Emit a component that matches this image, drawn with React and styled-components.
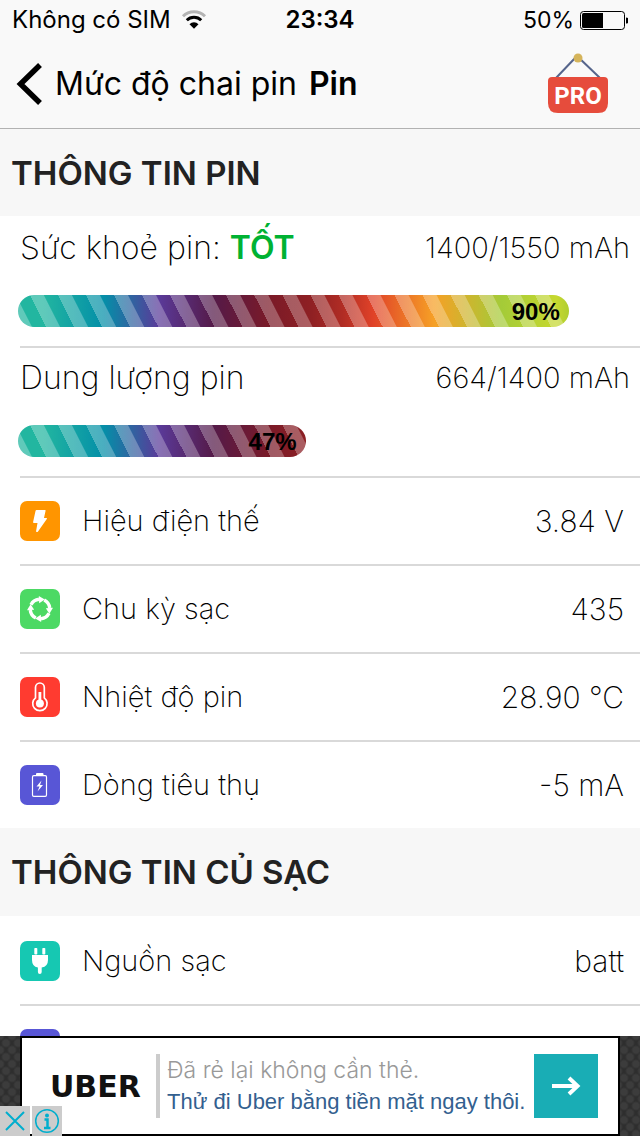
import React from 'react';
import styled, { createGlobalStyle } from 'styled-components';

const GlobalStyle = createGlobalStyle`
	*, *::before, *::after {
		box-sizing: border-box;
	}
	body {
		margin: 0;
		background-color: #ffffff;
		color: #000000;
		font-family: Inter, "Liberation Sans", sans-serif;
	}
`;

const Screen = styled.div`
	display: flex;
	flex-direction: column;
	height: 100vh;
`;

const Header = styled.header`
	flex: none;
	background-color: #f9f9f9;
`;

const StatusBar = styled.div`
	display: grid;
	grid-template-columns: 1fr auto 1fr;
	align-items: center;
	height: 40px;
	padding: 0 12px;
	font-size: 24px;
	line-height: 40px;
`;

const StatusGroup = styled.div`
	display: flex;
	align-items: center;
	justify-content: ${props => (props.$end ? 'flex-end' : 'flex-start')};
	gap: ${props => (props.$end ? '6px' : '10px')};
	font-size: ${props => (props.$end ? '23px' : '24px')};
	white-space: nowrap;
`;

const Clock = styled.time`
	font-weight: 600;
`;

const NavBar = styled.nav`
	display: flex;
	align-items: center;
	height: 88px;
	padding: 0 32px 0 16px;
`;

const BackButton = styled.button`
	display: flex;
	align-items: center;
	gap: 12px;
	padding: 0;
	border: none;
	background: none;
	color: inherit;
	font-family: inherit;
	font-size: 32px;
	line-height: 40px;
`;

const Title = styled.h1`
	flex: 1;
	margin: 0 0 0 12px;
	font-size: 32px;
	line-height: 40px;
	font-weight: 600;
`;

const ProButton = styled.button`
	display: block;
	padding: 0;
	border: none;
	background: none;
`;

const Content = styled.main`
	flex: 1;
	min-height: 0;
	overflow-y: auto;
	scrollbar-width: none;
`;

const SectionTitle = styled.h2`
	height: 88px;
	margin: 0;
	padding: 0 11px;
	background-color: #f7f7f7;
	color: #222222;
	font-size: 33px;
	line-height: 88px;
	font-weight: 600;

	section:first-child > & {
		border-top: 1px solid #b2b2b2;
	}
`;

const List = styled.ul`
	margin: 0;
	padding: 0 0 0 20px;
	list-style: none;
`;

const Item = styled.li`
	border-top: 2px solid #d9d9d9;

	&:first-child {
		border-top-color: transparent;
	}
`;

const Row = styled.div`
	display: flex;
	align-items: center;
	gap: 22px;
	height: 86px;
	padding-right: 16px;
	font-size: 30px;
	line-height: 40px;
	font-weight: 200;
`;

const Label = styled.span`
	flex: 1;
	font-size: 29px;
`;

const Meter = styled.div`
	display: flex;
	flex-direction: column;
	gap: 27px;
	height: 128px;
	padding: 10px 10px 0 0;
`;

const MeterHead = styled.div`
	display: flex;
	justify-content: space-between;
	font-size: 32px;
	line-height: 40px;
	font-weight: 200;
`;

const MeterValue = styled.span`
	font-size: 29px;
`;

const Good = styled.strong`
	color: #00b233;
	font-weight: 600;
`;

const Track = styled.div`
	container-type: inline-size;
	height: 32px;
	margin-left: -2px;
`;

const Fill = styled.div`
	height: 32px;
	padding-right: 9px;
	border-radius: 16px;
	background-image:
		repeating-linear-gradient(
			63deg,
			rgba(255, 255, 255, 0.28) 0 12px,
			rgba(255, 255, 255, 0) 13px 25px
		),
		linear-gradient(
			to right,
			#22b6a0 0%,
			#22b6a0 4%,
			#048fa8 14%,
			#5a3a99 23%,
			#551a48 32%,
			#7a1a28 41%,
			#8f2023 48%,
			#b02c24 53%,
			#e04228 58%,
			#f6a026 68%,
			#a4cb38 79%,
			#c6d82f 88%,
			#b0ce30 90%
		);
	background-size: 100% 100%, 100cqw 100%;
	font-family: "Liberation Sans", sans-serif;
	font-size: 24px;
	line-height: 34px;
	font-weight: 700;
	text-align: right;
`;

const Tile = styled.svg`
	display: block;
	flex: none;
	width: 40px;
	height: 40px;
	border-radius: 7px;
	background-color: ${props => props.$color};
`;

const Ad = styled.aside`
	position: relative;
	flex: none;
	height: 100px;
	padding: 0 20px;
	background-color: #2e2e2e;
	background-image:
		radial-gradient(circle, #3c3c3c 0 3px, rgba(60, 60, 60, 0) 5px),
		radial-gradient(circle, #3c3c3c 0 3px, rgba(60, 60, 60, 0) 5px);
	background-size: 12px 14px;
	background-position: 0 0, 6px 7px;
`;

const AdCard = styled.a`
	display: flex;
	align-items: center;
	height: 100px;
	padding: 0 20px 0 28px;
	border: 2px solid #000000;
	background-color: #ffffff;
	text-decoration: none;
`;

const AdBrand = styled.span`
	width: 106px;
	color: #111111;
	font-family: "DejaVu Sans", sans-serif;
	font-size: 30px;
	font-weight: 700;
`;

const AdText = styled.span`
	display: flex;
	flex: 1;
	flex-direction: column;
	height: 64px;
	padding-left: 7px;
	border-left: 4px solid #cccccc;
	color: #33608f;
	font-family: "Liberation Sans", sans-serif;
	font-size: 22px;
	line-height: 32px;
	white-space: nowrap;
`;

const AdLead = styled.span`
	color: #999999;
	font-family: Inter, sans-serif;
	font-size: 23px;
	font-weight: 300;
`;

const AdArrow = styled.span`
	display: flex;
	align-items: center;
	justify-content: center;
	flex: none;
	width: 64px;
	height: 64px;
	background-color: #19adb5;
`;

const AdChoices = styled.div`
	position: absolute;
	left: 0;
	bottom: 0;
	display: flex;
	gap: 2px;
`;

const AdChoice = styled.button`
	display: block;
	width: 30px;
	height: 30px;
	padding: 0;
	border: none;
	background-color: #cccccc;
`;

const WifiIcon = () => (
	<svg width="26" height="20" viewBox="0 0 26 20" fill="none" strokeWidth="3">
		<path d="M2 6.3a15.500 15.500 0 0 1 22 0" stroke="#b4b4b4" />
		<path d="M5.800 10.200a10.200 10.200 0 0 1 14.400 0" stroke="#000" />
		<path d="M13 18.800l-4.500-4.600a6.400 6.400 0 0 1 9 0z" fill="#000" />
	</svg>
);

const BatteryIcon = () => (
	<svg width="48" height="19" viewBox="0 0 48 19">
		<rect x="0.5" y="0.5" width="44" height="18" rx="3" fill="none" stroke="#000" />
		<path d="M2 3.500a1.500 1.500 0 0 1 1.500-1.500H23v15H3.500a1.500 1.500 0 0 1-1.500-1.500z" />
		<path d="M46 6.500q3 0 3 3t-3 3z" />
	</svg>
);

const BackIcon = () => (
	<svg width="27" height="42" viewBox="0 0 27 42" fill="none">
		<path d="M24 2L4.500 21 24 40" stroke="#000" strokeWidth="5.500" />
	</svg>
);

const ProIcon = () => (
	<svg width="60" height="60" viewBox="0 0 60 60">
		<path d="M8 25L29 3l23 22" fill="none" stroke="#56658c" strokeWidth="2" />
		<circle cx="30" cy="5" r="4.500" fill="#d5b45b" />
		<path d="M4 24h52q4 0 4 4v22q0 10-10 10H10Q0 60 0 50V28q0-4 4-4z" fill="#e64c3c" />
		<text
			x="30"
			y="51"
			fill="#fff"
			fontFamily="Roboto, sans-serif"
			fontSize="24"
			fontWeight="700"
			textAnchor="middle"
		>
			PRO
		</text>
	</svg>
);

const icons = {
	bolt: (
		<path
			d="M16.500 9h8.500q.8 0 .6.8L24 17h2.300q1.200 0 .5 1L18 30.500q-.5.700-1.300.5-.8-.2-.6-1L17.500 22h-3.600q-1 0-.8-1L15.500 10q.2-1 1-1z"
			fill="#fff"
		/>
	),
	cycle: (
		<g fill="#fff">
			{[0, 90, 180, 270].map(turn => (
				<g key={turn} transform={`rotate(${turn} 20 20)`}>
					<path d="M11 15.800a10 10 0 0 1 8-5.500" fill="none" stroke="#fff" strokeWidth="3.400" />
					<path d="M18.800 7l6 3.600-5.600 3.600z" />
				</g>
			))}
		</g>
	),
	thermometer: (
		<g fill="none" stroke="#fff">
			<path d="M15.500 20.800V10.400a4.400 4.400 0 0 1 8.800 0v10.400a7.200 7.200 0 1 1-8.800 0z" strokeWidth="1.700" />
			<path d="M19.900 15v11" strokeWidth="2.800" />
			<circle cx="19.900" cy="26.500" r="4" fill="#fff" stroke="none" />
		</g>
	),
	battery: (
		<g fill="#fff">
			<rect x="12.500" y="10.700" width="14" height="20.600" rx="1.300" fill="none" stroke="#fff" strokeWidth="1.200" />
			<path d="M16 10V9q0-1 1-1h5.500q1 0 1 1v1z" />
			<path d="M21.500 15.500L16.500 21.500h3l-2 5 5.500-6.500h-3z" />
		</g>
	),
	plug: (
		<g fill="#fff">
			<rect x="14.300" y="7" width="3" height="6.500" rx="0.800" />
			<rect x="22.300" y="7" width="3" height="6.500" rx="0.800" />
			<path d="M12 14h16v5q0 6.500-6.300 7.500v4.500q0 2-1.900 2t-1.900-2v-4.500Q12 25.500 12 19z" />
		</g>
	)
};

const meters = [
	{ label: 'Sức khoẻ pin:', status: 'TỐT', value: '1400/1550 mAh', percent: 90 },
	{ label: 'Dung lượng pin', value: '664/1400 mAh', percent: 47 }
];

const batteryRows = [
	{ icon: 'bolt', color: '#ff9500', label: 'Hiệu điện thế', value: '3.84 V' },
	{ icon: 'cycle', color: '#4cd964', label: 'Chu kỳ sạc', value: '435' },
	{ icon: 'thermometer', color: '#ff3b30', label: 'Nhiệt độ pin', value: '28.90 °C' },
	{ icon: 'battery', color: '#5856d6', label: 'Dòng tiêu thụ', value: '-5 mA' }
];

const chargerRows = [
	{ icon: 'plug', color: '#16c8b2', label: 'Nguồn sạc', value: 'batt' },
	{ icon: 'battery', color: '#5856d6', label: '', value: '' }
];

const MeterItem = ({ label, status, value, percent }) => (
	<Item>
		<Meter>
			<MeterHead>
				<span>
					{label} {status && <Good>{status}</Good>}
				</span>
				<MeterValue>{value}</MeterValue>
			</MeterHead>
			<Track>
				<Fill
					role="progressbar"
					aria-label={label}
					aria-valuenow={percent}
					style={{ width: `${percent}%` }}
				>
					{percent}%
				</Fill>
			</Track>
		</Meter>
	</Item>
);

const InfoItem = ({ icon, color, label, value }) => (
	<Item>
		<Row>
			<Tile viewBox="0 0 40 40" $color={color}>{icons[icon]}</Tile>
			<Label>{label}</Label>
			<span>{value}</span>
		</Row>
	</Item>
);

const App = () => (
	<Screen>
		<GlobalStyle />
		<Header>
			<StatusBar>
				<StatusGroup>
					Không có SIM
					<WifiIcon />
				</StatusGroup>
				<Clock>23:34</Clock>
				<StatusGroup $end>
					50%
					<BatteryIcon />
				</StatusGroup>
			</StatusBar>
			<NavBar>
				<BackButton type="button">
					<BackIcon />
					Mức độ chai pin
				</BackButton>
				<Title>Pin</Title>
				<ProButton type="button">
					<ProIcon />
				</ProButton>
			</NavBar>
		</Header>
		<Content>
			<section>
				<SectionTitle>THÔNG TIN PIN</SectionTitle>
				<List>
					{meters.map(meter => <MeterItem key={meter.label} {...meter} />)}
					{batteryRows.map(row => <InfoItem key={row.label} {...row} />)}
				</List>
			</section>
			<section>
				<SectionTitle>THÔNG TIN CỦ SẠC</SectionTitle>
				<List>
					{chargerRows.map(row => <InfoItem key={row.label} {...row} />)}
				</List>
			</section>
		</Content>
		<Ad>
			<AdCard href="#uber">
				<AdBrand>UBER</AdBrand>
				<AdText>
					<AdLead>Đã rẻ lại không cần thẻ.</AdLead>
					Thử đi Uber bằng tiền mặt ngay thôi.
				</AdText>
				<AdArrow>
					<svg width="30" height="20" viewBox="0 0 30 20" fill="none" stroke="#fff" strokeWidth="4">
						<path d="M1 10h26M18 2l8.500 8-8.500 8" />
					</svg>
				</AdArrow>
			</AdCard>
			<AdChoices>
				<AdChoice type="button" aria-label="Đóng">
					<svg width="30" height="30" viewBox="0 0 30 30" stroke="#00aecd" strokeWidth="2">
						<path d="M6 6l18 18M24 6L6 24" />
					</svg>
				</AdChoice>
				<AdChoice type="button" aria-label="Thông tin">
					<svg width="30" height="30" viewBox="0 0 30 30" fill="none" stroke="#00aecd">
						<circle cx="15" cy="15" r="11.300" strokeWidth="1.500" />
						<circle cx="15" cy="9.500" r="2" fill="#00aecd" stroke="none" />
						<path d="M12.500 13.500h3v8M12 22h6.500" strokeWidth="2.500" />
					</svg>
				</AdChoice>
			</AdChoices>
		</Ad>
	</Screen>
);

export default App;
